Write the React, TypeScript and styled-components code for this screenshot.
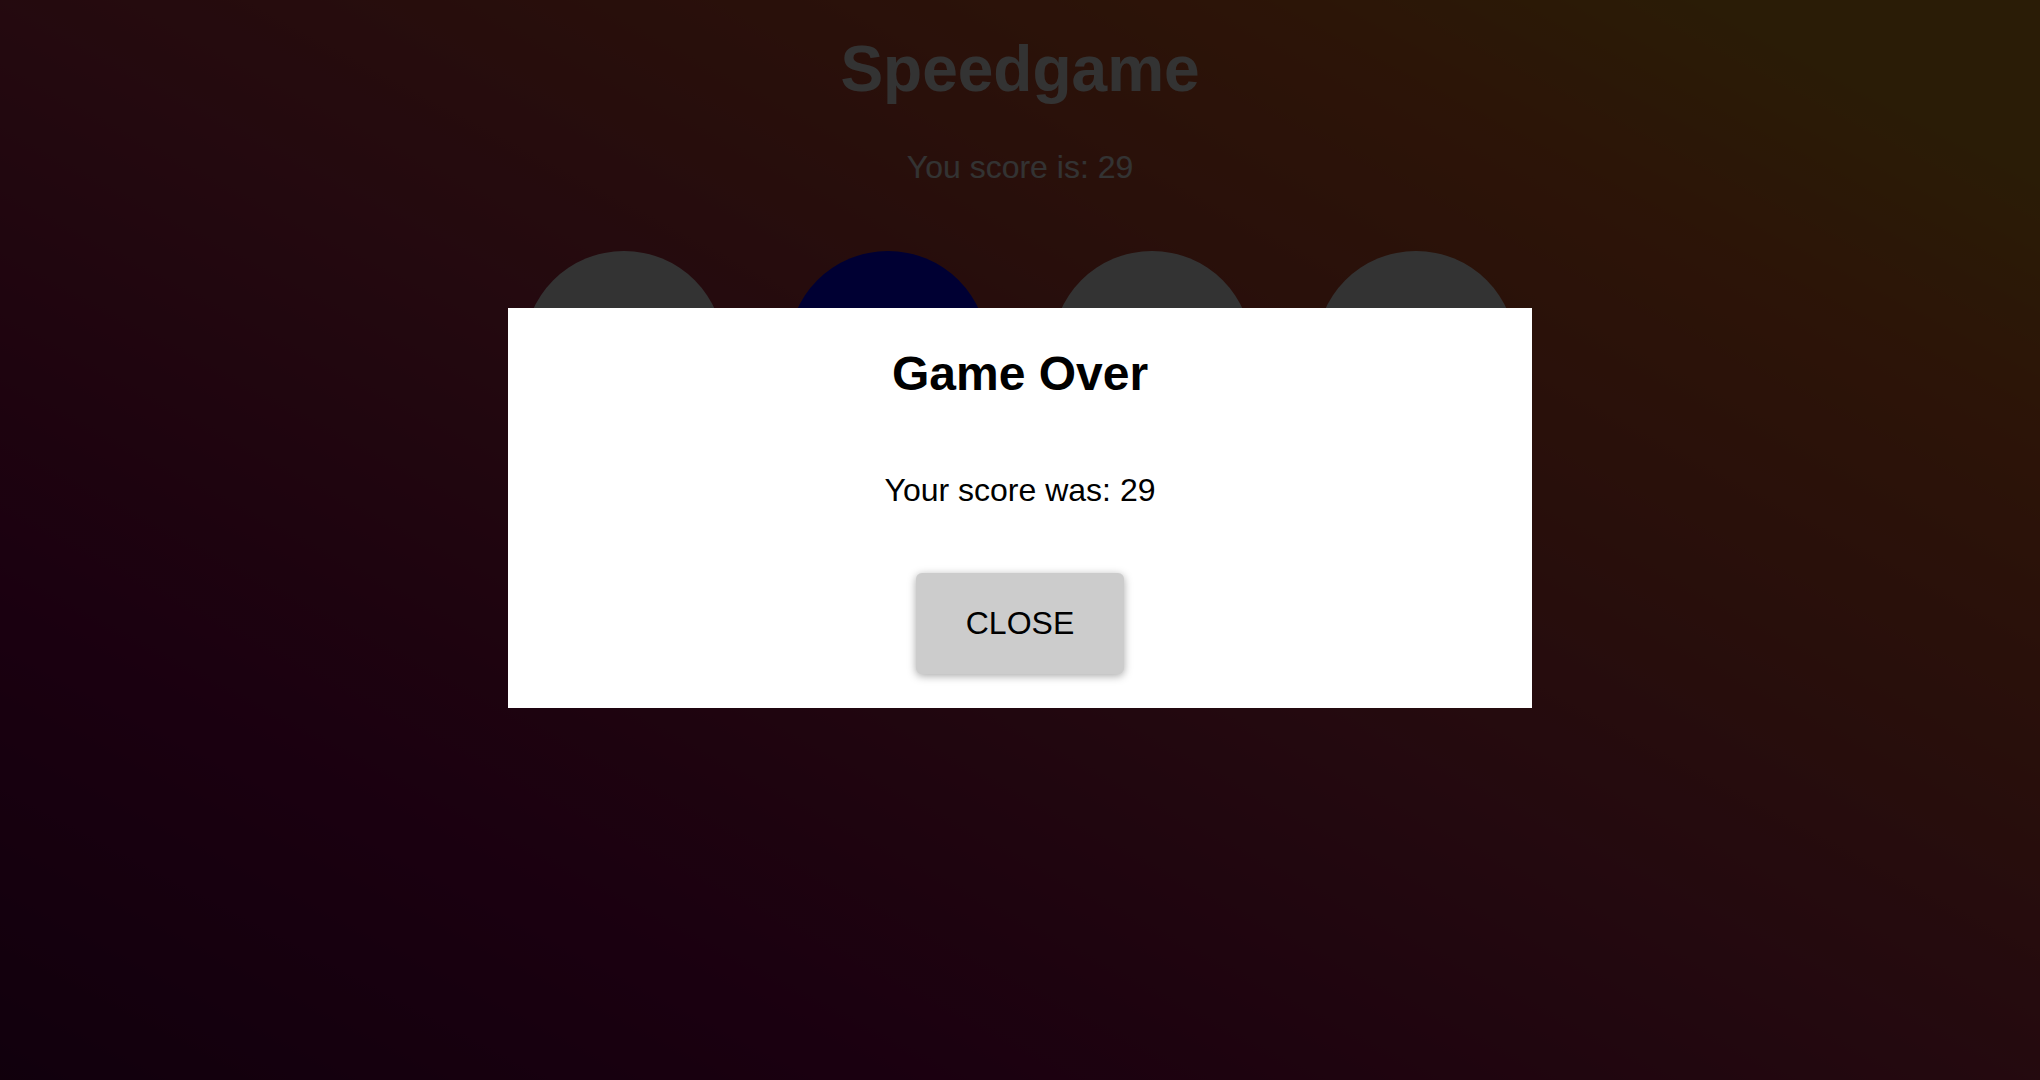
import styled, { createGlobalStyle } from "styled-components";

const GlobalStyle = createGlobalStyle`
html, body {
  margin: 0;
  padding: 0;
  height: 100%;
}
body {
  font-family: "Liberation Sans", Arial, Helvetica, sans-serif;
}
* {
  box-sizing: border-box;
}
`

const StyledPage = styled.div`
min-height: 100vh;
display: flex;
flex-direction: column;
align-items: center;
padding-top: 32px;
color: #ffffff;
background: linear-gradient(to top right, #55003f 0%, #820050 21%, #b4324a 50%, #dc6428 80%, #d28c1e 92%, #d28c1e 100%);
`

const StyledTitle = styled.h1`
margin: 0;
font-size: 64px;
font-weight: bold;
line-height: normal;
`

const StyledScore = styled.p`
margin: 43px 0 0;
font-size: 32px;
line-height: normal;
`

const StyledCircles = styled.div`
display: flex;
gap: 64px;
margin-top: 65px;
`

const StyledCircle = styled.div<{ $active?: boolean }>`
width: 200px;
height: 200px;
border-radius: 50%;
background: ${({ $active }) => ($active ? "#0000ff" : "#ffffff")};
`

const StyledOverlay = styled.div`
position: fixed;
inset: 0;
display: flex;
justify-content: center;
align-items: flex-start;
padding-top: 308px;
background: rgba(0, 0, 0, 0.8);
`

const StyledModal = styled.div`
width: 1024px;
display: flex;
flex-direction: column;
align-items: center;
padding: 38px 0 34px;
background: #ffffff;
color: #000000;
font-size: 32px;
`

const StyledModalTitle = styled.h2`
margin: 0;
font-size: 48px;
font-weight: bold;
line-height: normal;
`

const StyledModalText = styled.p`
margin: 71px 0 0;
line-height: normal;
`

const StyledCloseButton = styled.button`
margin-top: 64px;
padding: 32px 50px;
border: none;
border-radius: 6px;
background: #cccccc;
color: #000000;
font-family: inherit;
font-size: 32px;
line-height: normal;
box-shadow: 0 2px 8px rgba(0, 0, 0, 0.35);
cursor: pointer;
`

const circles = [false, true, false, false];
const score = 29;

const App = () => {
    return (
        <>
            <GlobalStyle/>
            <StyledPage>
                <StyledTitle>Speedgame</StyledTitle>
                <StyledScore>You score is: {score}</StyledScore>
                <StyledCircles>
                    {circles.map((active, i) => (
                        <StyledCircle key={i} $active={active}/>
                    ))}
                </StyledCircles>
            </StyledPage>
            <StyledOverlay>
                <StyledModal>
                    <StyledModalTitle>Game Over</StyledModalTitle>
                    <StyledModalText>Your score was: {score}</StyledModalText>
                    <StyledCloseButton>CLOSE</StyledCloseButton>
                </StyledModal>
            </StyledOverlay>
        </>
    );
}

export default App;
